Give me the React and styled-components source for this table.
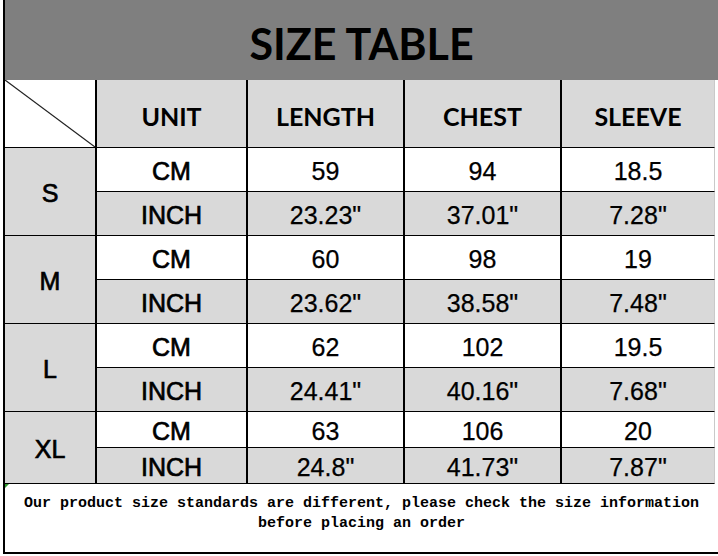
import React from 'react';
import styled, { createGlobalStyle } from 'styled-components';

const GlobalStyle = createGlobalStyle`
  html, body {
    margin: 0;
    padding: 0;
    background: #fff;
  }
  * {
    box-sizing: border-box;
  }
`;

const Sheet = styled.div`
  width: 715px;
  height: 554px;
  margin-left: 3px;
  border-left: 2px solid #000;
  display: flex;
  flex-direction: column;
`;

const Title = styled.div`
  height: 80px;
  background: #7f7f7f;
  display: flex;
  align-items: center;
  justify-content: center;
  padding-top: 6px;
  font-family: Lato, 'Open Sans', sans-serif;
  font-weight: 700;
  font-size: 43px;
  color: #000;
`;

const Grid = styled.div`
  display: grid;
  width: 710px;
  grid-template-columns: 92px 151px 157px 157px 153px;
  grid-template-rows: 68px repeat(6, 44px) repeat(2, 36px);
`;

// $head = column titles, $bold = unit / size labels (semi-bold look)
const Cell = styled.div`
  display: flex;
  align-items: center;
  justify-content: center;
  padding-top: ${p => (p.$head ? 5 : 4)}px;
  background: ${p => (p.$shade ? '#d9d9d9' : '#fff')};
  border-bottom: 1px solid #000;
  border-right: ${p => (p.$last ? '1px solid #c9c9c9' : '2px solid #000')};
  font-family: ${p =>
    p.$head ? "Lato, 'Open Sans', sans-serif" : "'Liberation Sans', Arial, sans-serif"};
  font-weight: ${p => (p.$head ? 700 : 400)};
  -webkit-text-stroke: ${p => (p.$head ? 0 : p.$bold ? 0.7 : 0.25)}px #000;
  font-size: 25px;
  color: #000;
  white-space: nowrap;
`;

const SizeCell = styled(Cell)`
  grid-row: span 2;
`;

const Corner = styled.div`
  background: #fff;
  border-bottom: 1px solid #000;
  border-right: 2px solid #000;
`;

const Note = styled.div`
  position: relative;
  flex: 1;
  border-bottom: 2px solid #000;
  padding-top: 10px;
  font-family: 'Liberation Mono', 'Courier New', monospace;
  font-weight: 700;
  font-size: 15px;
  line-height: 20px;
  text-align: center;
  color: #000;
`;

const Marker = styled.div`
  position: absolute;
  top: 0;
  left: 0;
  width: 0;
  height: 0;
  border-top: 4px solid #2f9a2f;
  border-right: 4px solid transparent;
`;

const sizes = [
  { size: 'S', cm: ['59', '94', '18.5'], inch: ['23.23"', '37.01"', '7.28"'] },
  { size: 'M', cm: ['60', '98', '19'], inch: ['23.62"', '38.58"', '7.48"'] },
  { size: 'L', cm: ['62', '102', '19.5'], inch: ['24.41"', '40.16"', '7.68"'] },
  { size: 'XL', cm: ['63', '106', '20'], inch: ['24.8"', '41.73"', '7.87"'] },
];

const heads = ['UNIT', 'LENGTH', 'CHEST', 'SLEEVE'];

const App = () => (
  <>
    <GlobalStyle />
    <Sheet>
      <Title>SIZE TABLE</Title>
      <Grid>
        <Corner>
          <svg width="90" height="67" viewBox="0 0 90 67" style={{ display: 'block' }}>
            <line x1="0" y1="0" x2="90" y2="67" stroke="#222" strokeWidth="1.2" />
          </svg>
        </Corner>
        {heads.map((h, i) => (
          <Cell key={h} $head $shade $last={i === heads.length - 1}>
            {h}
          </Cell>
        ))}
        {sizes.map(row => (
          <React.Fragment key={row.size}>
            <SizeCell $shade $bold>
              {row.size}
            </SizeCell>
            <Cell $bold>CM</Cell>
            {row.cm.map((v, i) => (
              <Cell key={'c' + i} $last={i === 2}>
                {v}
              </Cell>
            ))}
            <Cell $shade $bold>
              INCH
            </Cell>
            {row.inch.map((v, i) => (
              <Cell key={'i' + i} $shade $last={i === 2}>
                {v}
              </Cell>
            ))}
          </React.Fragment>
        ))}
      </Grid>
      <Note>
        <Marker />
        Our product size standards are different, please check the size information
        <br />
        before placing an order
      </Note>
    </Sheet>
  </>
);

export default App;
